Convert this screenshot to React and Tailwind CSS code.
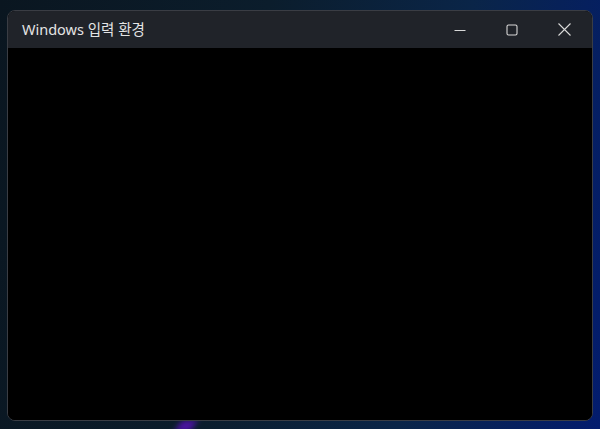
import React from "react";

export default function App() {
  return (
    <div className="relative w-[600px] h-[429px] overflow-hidden pt-[10px] pl-[7px]">
      <div className="absolute inset-0 -z-10 w-[600px] h-[429px] bg-[linear-gradient(100deg,#0a1620_0%,#0b1d2c_40%,#0a2548_70%,#031c6e_100%)]" />
      <div className="absolute left-[178px] top-[420px] -z-10 w-[16px] h-[12px] bg-[#4a14a0] blur-[3px] -skew-x-[30deg]" />
      <div className="w-[586px] h-[411px] rounded-[8px] border border-[#3a3d44] bg-black overflow-hidden flex flex-col">
        <div className="h-[37px] bg-[#202329] flex items-center shrink-0">
          <span
            className="pl-[14px] text-[14.5px] text-[#e4e4e4] leading-none"
            style={{ fontFamily: '"Segoe UI", "Noto Sans", "Noto Sans CJK KR", sans-serif' }}
          >
            Windows 입력 환경
          </span>
          <div className="ml-auto flex h-full mr-[2px]">
            <div className="w-[52px] h-full flex items-center justify-center">
              <svg width="12" height="12" viewBox="0 0 12 12">
                <path d="M0.5 6.5h11" stroke="#d8d8d8" strokeWidth="1" />
              </svg>
            </div>
            <div className="w-[52px] h-full flex items-center justify-center">
              <svg width="12" height="12" viewBox="0 0 12 12">
                <rect x="1" y="1" width="10" height="10" rx="1.5" fill="none" stroke="#d8d8d8" strokeWidth="1.1" />
              </svg>
            </div>
            <div className="w-[52px] h-full flex items-center justify-center">
              <svg width="13" height="13" viewBox="0 0 13 13">
                <path d="M0.5 0.5L12.5 12.5M12.5 0.5L0.5 12.5" stroke="#d8d8d8" strokeWidth="1.1" />
              </svg>
            </div>
          </div>
        </div>
        <div className="flex-1 bg-black" />
      </div>
    </div>
  );
}
